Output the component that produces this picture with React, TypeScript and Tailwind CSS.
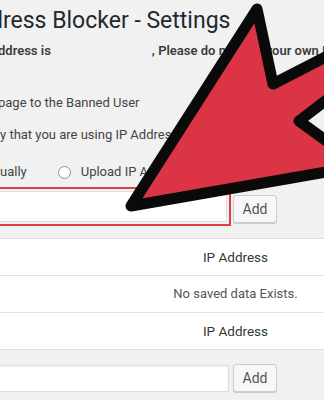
function AddButton({ className = '' }: { className?: string }) {
  return (
    <button
      type="button"
      className={`h-[28px] w-[44px] shrink-0 rounded-[3px] border border-[#cccccc] bg-[#f7f7f7] text-[14px] leading-none text-[#555] shadow-[0_1px_0_#cccccc] ${className}`}
    >
      Add
    </button>
  )
}

function Row({ children, className = '' }: { children: React.ReactNode; className?: string }) {
  return (
    <div className="grid h-[37px] grid-cols-[147px_177px] items-center border-b border-[#e1e1e1] bg-white">
      <div />
      <div className={`whitespace-nowrap text-center ${className}`}>{children}</div>
    </div>
  )
}

export default function App() {
  return (
    <main className="relative h-[400px] w-[324px] overflow-hidden bg-[#f1f1f1] font-[Roboto,sans-serif] text-[#444]">
      <div className="flex flex-col pt-[6px]">
        <h1 className="-ml-[10px] whitespace-nowrap text-[23px] font-normal leading-[29px] text-[#23282d]">
          dress Blocker - Settings
        </h1>

        <p className="-ml-[2px] mt-[7px] whitespace-nowrap text-[13px] font-semibold leading-[18px] text-[#3c3c3c]">
          ddress is
          <span className="ml-[101px]">, Please do not add your own IP Address</span>
        </p>

        <p className="-ml-[2px] mt-[34px] whitespace-nowrap text-[13px] leading-[18px]">
          page to the Banned User
        </p>

        <p className="mt-[14px] whitespace-nowrap text-[13px] leading-[18px]">
          y that you are using IP Address for testing
        </p>

        <div className="mt-[19px] flex h-[18px] items-center whitespace-nowrap text-[13px]">
          <span>ually</span>
          <span className="ml-[31px] h-[13px] w-[13px] shrink-0 rounded-full border border-[#8c8f94] bg-white" />
          <span className="ml-[10px]">Upload IP Address</span>
        </div>

        {/* highlighted field */}
        <div className="mt-[6px] flex items-start">
          <div className="-ml-[10px] h-[39px] w-[241px] shrink-0 border-2 border-[#dc3f45] p-[2px]">
            <div className="h-full w-full border border-[#dddddd] bg-white" />
          </div>
          <AddButton className="ml-[2px] mt-[8px]" />
        </div>

        {/* saved data table */}
        <div className="mt-[12px] flex flex-col border-t border-[#e1e1e1]">
          <Row className="text-[13.5px] text-[#32373c]">IP Address</Row>
          <Row className="text-[13px] text-[#555]">No saved data Exists.</Row>
          <Row className="text-[13.5px] text-[#32373c]">IP Address</Row>
        </div>

        <div className="mt-[15px] flex items-start">
          <div className="-ml-[10px] h-[27px] w-[239px] shrink-0 border border-[#dddddd] bg-white shadow-[inset_0_1px_2px_rgba(0,0,0,0.07)]" />
          <AddButton className="-mt-[1px] ml-[4px]" />
        </div>
      </div>

      {/* red arrow drawn over the page */}
      <svg
        className="pointer-events-none absolute left-0 top-0"
        width="324"
        height="400"
        viewBox="0 0 324 400"
      >
        <polygon
          points="131,206 257,9 273,84 380,29 380,59 299,121 361,166"
          fill="#db3444"
          stroke="#0a0a0a"
          strokeWidth="11"
          strokeLinejoin="round"
        />
      </svg>
    </main>
  )
}
